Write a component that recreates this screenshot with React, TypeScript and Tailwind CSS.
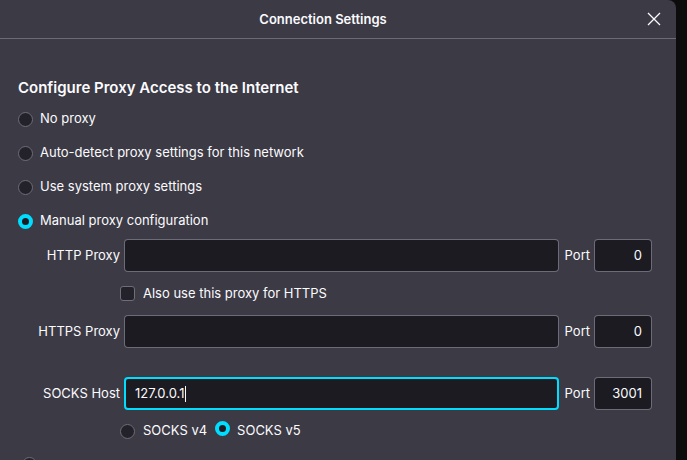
import React from "react";

const font = { fontFamily: "Inter, 'Noto Sans', sans-serif" };

function Radio({ checked }: { checked?: boolean }) {
  return checked ? (
    <span className="box-border inline-block h-[15px] w-[15px] shrink-0 rounded-full border-[4px] border-[#00ddff] bg-[#1c1b22]" />
  ) : (
    <span className="box-border inline-block h-[15px] w-[15px] shrink-0 rounded-full border border-[#6f6e78] bg-[#23222b]" />
  );
}

function Field({
  label,
  value,
  port,
  focused,
}: {
  label: string;
  value?: string;
  port: string;
  focused?: boolean;
}) {
  return (
    <div className="flex h-[33px] items-stretch">
      <div className="flex w-[102px] items-center justify-end text-[13px]">{label}</div>
      <div
        className={`ml-1 flex flex-1 items-center rounded-[4px] bg-[#1c1b22] pl-[9px] text-[13px] ${
          focused ? "border-2 border-[#00ddff] pl-[8px]" : "border border-[#8f8f9d]/70"
        }`}
      >
        {value}
        {focused && <span className="ml-[1px] inline-block h-[16px] w-px bg-[#fbfbfe]" />}
      </div>
      <div className="ml-[6px] flex items-center text-[13px]">Port</div>
      <div className="ml-1 flex w-[58px] items-center justify-end rounded-[4px] border border-[#8f8f9d]/70 bg-[#1c1b22] pr-[9px] text-[13px]">
        {port}
      </div>
    </div>
  );
}

export default function App() {
  const options = [
    { label: "No proxy" },
    { label: "Auto-detect proxy settings for this network" },
    { label: "Use system proxy settings" },
    { label: "Manual proxy configuration", checked: true },
  ];

  return (
    <div className="flex h-[460px] w-[687px] overflow-hidden bg-[#0c0c0d] text-[#fbfbfe]" style={font}>
      <div className="flex w-[676px] flex-col rounded-tr-[8px] bg-[#3b3a45]">
        {/* title bar */}
        <div className="relative flex h-[39px] shrink-0 items-center justify-center border-b border-[#6b6a75] pr-[30px] pt-[2px]">
          <span className="text-[13px] font-semibold">Connection Settings</span>
          <svg
            className="absolute right-[14px] top-[11px]"
            width="16"
            height="16"
            viewBox="0 0 16 16"
            fill="none"
            stroke="#fbfbfe"
            strokeWidth="1.3"
          >
            <path d="M2 2l12 12M14 2L2 14" />
          </svg>
        </div>

        <div className="flex flex-col pl-[18px] pr-[24px] pt-[39px]">
          <h2 className="h-[20px] text-[15px] font-semibold leading-[20px]">
            Configure Proxy Access to the Internet
          </h2>
          <div className="mt-1 flex flex-col">
            {options.map((o) => (
              <div key={o.label} className="flex h-[34px] items-center gap-[7px] text-[13px]">
                <Radio checked={o.checked} />
                <span>{o.label}</span>
              </div>
            ))}
          </div>

          <div className="mt-[1px]">
            <Field label="HTTP Proxy" port="0" />
          </div>
          <div className="flex h-[43px] items-center gap-2 pl-[102px] text-[13px]">
            <span className="box-border inline-block h-[15px] w-[15px] rounded-[3px] border border-[#6f6e78] bg-[#23222b]" />
            <span>Also use this proxy for HTTPS</span>
          </div>
          <Field label="HTTPS Proxy" port="0" />

          <div className="mt-[29px]">
            <Field label="SOCKS Host" value="127.0.0.1" port="3001" focused />
          </div>
          <div className="flex h-[42px] items-center pl-[102px] text-[13px]">
            <Radio />
            <span className="ml-2">SOCKS v4</span>
            <span className="ml-[8px]">
              <Radio checked />
            </span>
            <span className="ml-[7px]">SOCKS v5</span>
          </div>
          <div className="mt-[5px] flex pl-[4px]">
            <Radio />
          </div>
        </div>
      </div>
    </div>
  );
}
